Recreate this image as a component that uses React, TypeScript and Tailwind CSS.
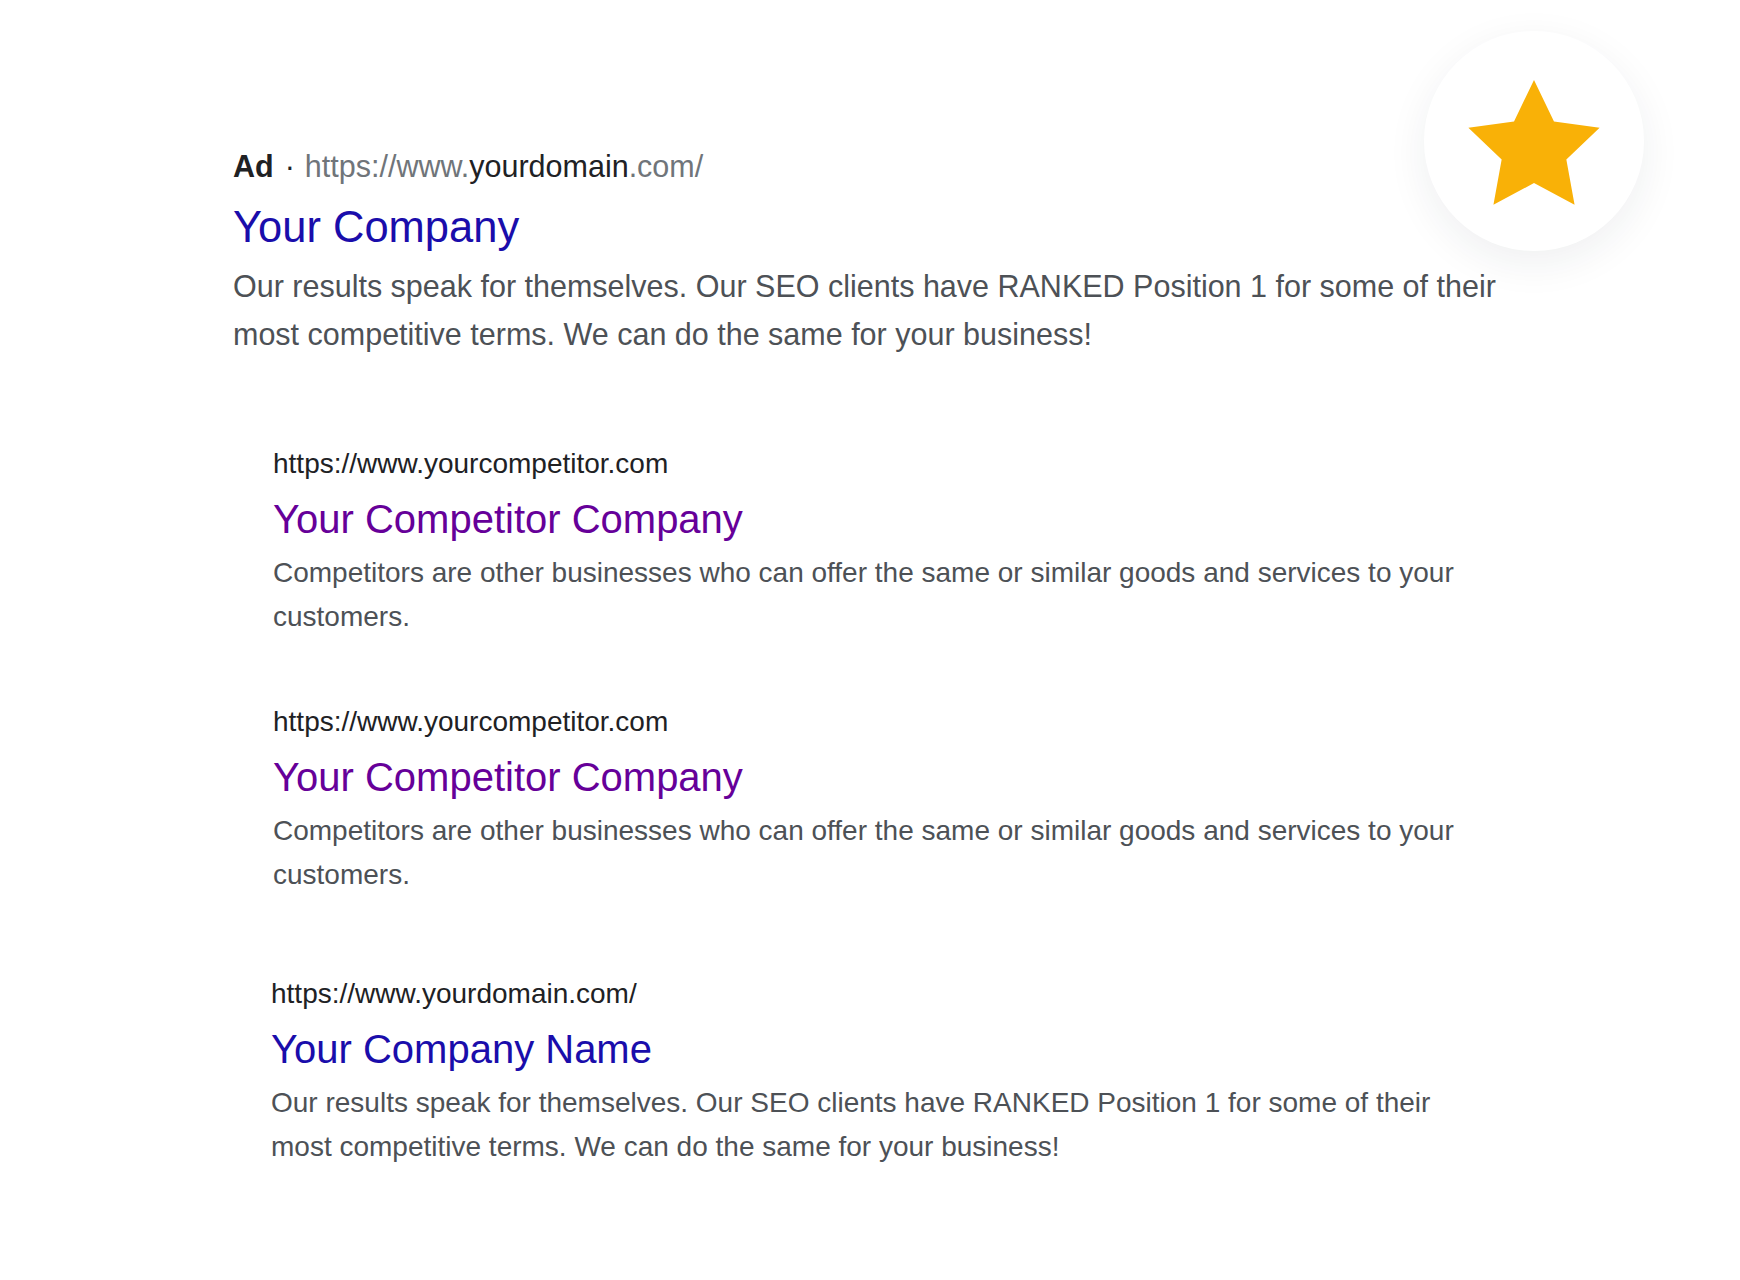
const competitors = [
  {
    url: "https://www.yourcompetitor.com",
    title: "Your Competitor Company",
    text: "Competitors are other businesses who can offer the same or similar goods and services to your customers.",
  },
  {
    url: "https://www.yourcompetitor.com",
    title: "Your Competitor Company",
    text: "Competitors are other businesses who can offer the same or similar goods and services to your customers.",
  },
];

function StarBadge() {
  return (
    <div className="absolute left-[1424px] top-[31px] flex h-[220px] w-[220px] items-center justify-center rounded-full bg-white shadow-[0_12px_40px_rgba(30,40,60,0.07)]">
      <svg width="140" height="140" viewBox="-70 -78 140 140">
        <polygon
          fill="#f9b107"
          points="0,-69 19.98,-27.51 65.62,-21.32 32.34,10.51 40.56,55.82 0,34 -40.56,55.82 -32.34,10.51 -65.62,-21.32 -19.98,-27.51"
        />
      </svg>
    </div>
  );
}

function Result({ url, title, text, titleColor, width }: { url: string; title: string; text: string; titleColor: string; width: string }) {
  return (
    <div className={width}>
      <div className="text-[28px] leading-[40px] text-[#202124]">{url}</div>
      <div className={`mt-[9px] text-[40px] leading-[52px] ${titleColor}`}>{title}</div>
      <p className="mt-[6px] text-[28px] leading-[44px] text-[#4d5156]">{text}</p>
    </div>
  );
}

export default function App() {
  return (
    <div className="relative min-h-[1280px] w-full overflow-hidden bg-white font-['Liberation_Sans',Arial,sans-serif]">
      <div className="pl-[233px] pt-[146px]">
        {/* sponsored result */}
        <div className="w-[1300px]">
          <div className="flex items-center text-[30.5px] leading-[40px]">
            <span className="font-bold text-[#202124]">Ad</span>
            <span className="ml-[11px] mr-[10px] text-[#202124]">·</span>
            <span className="text-[#70757a]">
              https://www.<span className="text-[#202124]">yourdomain</span>.com/
            </span>
          </div>
          <div className="mt-[13px] text-[43.5px] leading-[56px] text-[#1a0dab]">Your Company</div>
          <p className="mt-[7px] text-[30.5px] leading-[48px] text-[#4d5156]">
            Our results speak for themselves. Our SEO clients have RANKED Position 1 for some of their most competitive terms. We can do the same for your business!
          </p>
        </div>

        <div className="mt-[86px] pl-[40px]">
          <Result {...competitors[0]} titleColor="text-[#660099]" width="w-[1240px]" />
          <div className="mt-[63px]">
            <Result {...competitors[1]} titleColor="text-[#660099]" width="w-[1240px]" />
          </div>
        </div>

        <div className="mt-[77px] pl-[38px]">
          <Result
            url="https://www.yourdomain.com/"
            title="Your Company Name"
            text="Our results speak for themselves. Our SEO clients have RANKED Position 1 for some of their most competitive terms. We can do the same for your business!"
            titleColor="text-[#1a0dab]"
            width="w-[1195px]"
          />
        </div>
      </div>

      <StarBadge />
    </div>
  );
}
